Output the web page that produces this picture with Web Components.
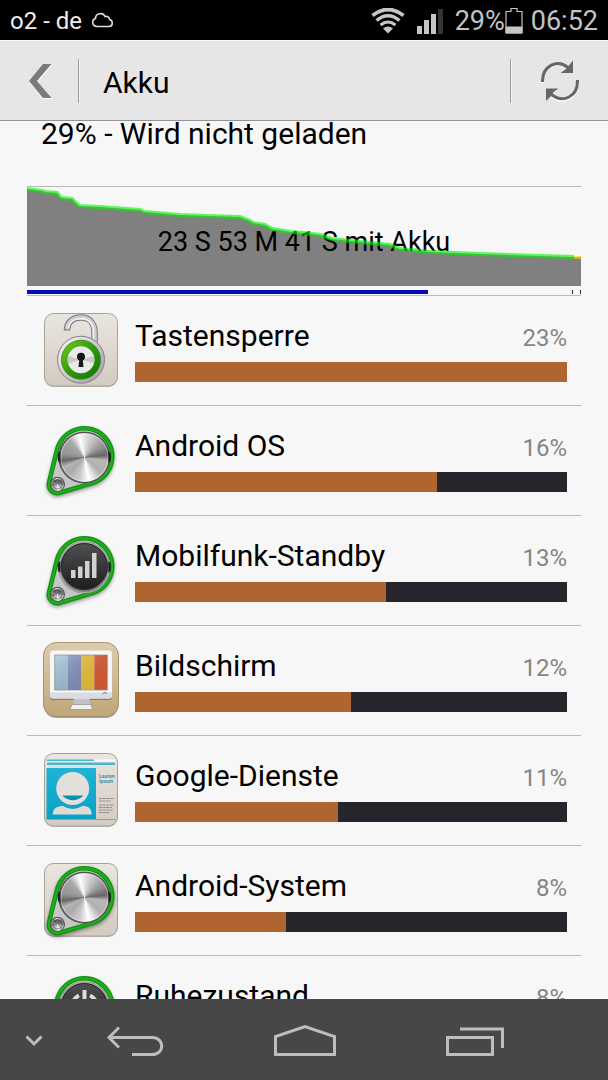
<!DOCTYPE html>
<html lang="de">
<head>
<meta charset="utf-8">
<meta name="viewport" content="width=device-width, initial-scale=1">
<title>Akku</title>
<style>
	body {
		margin: 0;
		background: #f7f7f7;
		color: #000;
		font-family: Roboto, "Liberation Sans", sans-serif;
		font-size: 30px;
	}
</style>
</head>
<body>
<battery-screen></battery-screen>

<script>
class BaseElement extends HTMLElement {
	constructor() {
		super();

		this.attachShadow({ mode: "open" });

		this.shadowRoot.appendChild(this._getTemplate().content.cloneNode(true));
	}

	_getTemplate() {
		const template = document.createElement("template");

		template.innerHTML = this._getMarkup();

		return template;
	}
}

class StatusBar extends BaseElement {
	_getMarkup() {
		return `
			<style>
				:host {
					display: flex;
					flex: none;
					align-items: center;
					box-sizing: border-box;
					height: 40px;
					padding: 2px 10px 0;
					background: #000;
					color: #c3c3c3;
					font-size: 27px;
					line-height: 38px;
				}
				.carrier {
					margin-right: 10px;
					color: #eee;
					font-size: 24px;
				}
				.wifi {
					margin-left: auto;
				}
				.signal {
					margin: 0 12px;
				}
				.clock {
					margin-left: 8px;
				}
				svg {
					display: block;
					flex: none;
				}
			</style>
			<span class="carrier">o2 - de</span>
			<svg width="22" height="18" viewBox="0 0 22 18" fill="none" stroke="#ddd" stroke-width="1.6">
				<path d="M5 14.5C-.5 14-.5 7.5 3.5 6.5C3.5 1 11 0 13 4.5C16 4 17.5 5.500 17.5 7.5C21.5 8.5 21 14.5 17 14.5Z"/>
			</svg>
			<svg class="wifi" width="34" height="26" viewBox="0 0 34 26" fill="none" stroke="#c6c6c6" stroke-width="3.8">
				<path d="M1.500 7.500Q17-4.500 32.500 7.500"/>
				<path d="M5.500 12.500Q17 3 28.500 12.500" stroke-width="3.2"/>
				<path d="M9.500 17Q17 11 24.500 17" stroke-width="3"/>
				<path d="M12 20.500Q17 16.500 22 20.500L17 25.500Z" fill="#c6c6c6" stroke="none"/>
			</svg>
			<svg class="signal" width="26" height="26" viewBox="0 0 26 26" fill="#c6c6c6">
				<path d="M0 18h5v8H0zM7 12h5v14H7zM14 6h5v20h-5z"/>
				<path d="M21 1h5v25h-5z" fill="#333"/>
			</svg>
			<span>29%</span>
			<svg width="18" height="26" viewBox="0 0 18 26" fill="none" stroke="#c6c6c6">
				<path d="M1 25V3.5h5v-3h6v3h5V25z" stroke-width="1.2"/>
				<path d="M1 19h16v6H1z" fill="#c6c6c6"/>
			</svg>
			<time class="clock">06:52</time>
		`;
	}
}

class TitleBar extends BaseElement {
	_getMarkup() {
		return `
			<style>
				:host {
					display: flex;
					flex: none;
					align-items: center;
					box-sizing: border-box;
					height: 81px;
					border-top: 1px solid #f8f8f8;
					border-bottom: 1px solid #949494;
					background: #e6e6e6;
				}
				h1 {
					flex: 1;
					margin: 0;
					padding: 4px 0 0 23px;
					font-size: 30px;
					font-weight: 400;
					line-height: 36px;
				}
				button {
					display: flex;
					justify-content: center;
					align-items: center;
					box-sizing: border-box;
					height: 100%;
					margin: 0;
					padding: 0;
					border: 0;
					background: none;
				}
				.back {
					width: 78px;
					padding-left: 2px;
				}
				.refresh {
					width: 96px;
					padding-top: 2px;
				}
				.rule {
					width: 1px;
					height: 44px;
					background: #999;
					border-right: 1px solid #f4f4f4;
				}
			</style>
			<button class="back" aria-label="Zurück">
				<svg width="24" height="36" viewBox="0 0 24 36">
					<path d="M15 2H24L10 19L24 36H15L1 19Z" fill="#fff"/>
					<path d="M15 1H23.5L9 18L23.5 35H15L1 18Z" fill="#7b7b7b"/>
				</svg>
			</button>
			<div class="rule"></div>
			<h1><slot></slot></h1>
			<div class="rule"></div>
			<button class="refresh" aria-label="Aktualisieren">
				<svg width="40" height="44" viewBox="0 0 40 44" fill="none" stroke-width="3">
					<path d="M2.500 23C2 7 17-1 28.500 8.500M37.500 21C38 38 23 45 11.500 36.500" stroke="#fff"/>
					<path d="M2.500 22C2 6 17-1.500 28 7.500M37.500 20C38 37 23 43.500 11.500 34.500" stroke="#666"/>
					<path d="M33 .5V13H20.500L26 9L28.500 6ZM6 41V28.500H18.500L13.500 32L11 36Z" fill="#666"/>
				</svg>
			</button>
		`;
	}
}

class BatteryChart extends BaseElement {
	_getMarkup() {
		return `
			<style>
				:host {
					display: block;
					padding-bottom: 1px;
					border-top: 1px solid #b9b9b9;
					border-bottom: 1px solid #b9b9b9;
				}
				.plot {
					display: grid;
					align-items: center;
					margin-bottom: 4px;
				}
				.plot > * {
					grid-area: 1 / 1;
				}
				.plot svg {
					display: block;
					width: 100%;
					height: 99px;
				}
				.label {
					padding-top: 10px;
					font-size: 27px;
					line-height: 32px;
					text-align: center;
				}
				.awake {
					display: block;
					width: 100%;
					height: 4px;
				}
			</style>
			<div class="plot">
				<svg viewBox="0 0 554 99" preserveAspectRatio="none">
					<path d="M0 2L15 4L18 5L30 6L34 11L45 12L52 19L73 20L113 23L117 25L153 28L213 30L223 34L226 36L238 38L245 42L263 45L277 46L293 48L305 52L333 55L363 58L373 62L403 65L453 67L543 70H554V99H0Z" fill="#808080"/>
				</svg>
				<div class="label"><slot></slot></div>
				<svg viewBox="0 0 554 99" preserveAspectRatio="none" fill="none" stroke-width="4">
					<path d="M0 2L15 4L18 5L30 6L34 11L45 12L52 19L73 20L113 23L117 25L153 28L213 30L223 34L226 36L238 38L245 42L263 45L277 46L293 48L305 52L333 55L363 58L373 62L403 65L453 67L547 70" stroke="#00f000" stroke-opacity=".6"/>
					<path d="M547 70.500H554" stroke="#ffd400" stroke-opacity=".6" stroke-width="3"/>
				</svg>
			</div>
			<svg class="awake" viewBox="0 0 554 4" preserveAspectRatio="none">
				<path d="M0 0H401V4H0Z" fill="#0a0ab4"/>
				<path d="M545 0H546V4H545ZM553 0H554V4H553Z" fill="#224"/>
			</svg>
		`;
	}
}

const TILE = `
	<rect x="1.500" y="3" width="73" height="72" rx="9" fill="#000" opacity=".25"/>
	<rect x="1.500" y="1.500" width="73" height="72.500" rx="9" fill="url(#tile)" stroke="#a9a29a"/>
`;

const TILE_DEFS = `
	<linearGradient id="tile" x2="0" y2="1">
		<stop stop-color="#e9e5e0"/>
		<stop offset="1" stop-color="#d3cbc1"/>
	</linearGradient>
`;

// Belt around a big and a small wheel, the base of all system icons.
const BELT_PATH = "M14.100 27.600A28 28 0 1 1 49.200 61.100L16.700 70.700A8.500 8.500 0 0 1 6 60.500Z";

const BELT = `
	<path d="${BELT_PATH}" fill="#000" stroke="#000" stroke-width="3" opacity=".5" filter="url(#soft)" transform="translate(0 2)"/>
	<path d="${BELT_PATH}" fill="#c6c6c6" stroke="#129412" stroke-width="4.600" stroke-linejoin="round"/>
	<path d="${BELT_PATH}" fill="none" stroke="#1fae1c" stroke-width="2"/>
	<circle cx="14.500" cy="62.300" r="7.500" fill="#555"/>
	<foreignObject x="8" y="56" width="13" height="13"><div class="metal"></div></foreignObject>
	<circle cx="14.500" cy="62.500" r="4.500" fill="none" stroke="#666" stroke-width=".8"/>
	<path d="M9.500 60C11 56 18 56 19.500 60L14.500 62Z" fill="#444" opacity=".75"/>
`;

const BELT_DEFS = `<filter id="soft" x="-20%" y="-20%" width="140%" height="140%"><feGaussianBlur stdDeviation="2"/></filter>`;

const METAL = `
	<circle cx="41.300" cy="35.500" r="26" fill="#666"/>
	<foreignObject x="16" y="10" width="51" height="51"><div class="metal big"></div></foreignObject>
	<circle cx="41.500" cy="35.500" r="23.500" fill="none" stroke="#fff" stroke-opacity=".35"/>
	<path d="M14.800 38v-5q0-3 2.500-4v12q-2-1-2.500-3zM67.800 38v-5q0-3-2.500-4v12q2-1 2.500-3z" fill="#222"/>
`;

const DARK = `
	<circle cx="41.300" cy="35.500" r="26" fill="#777"/>
	<circle cx="41.300" cy="35.500" r="25" fill="none" stroke="#aaa" stroke-width="1.500"/>
	<path d="M14.800 38v-5q0-3 2.500-4v12q-2-1-2.500-3zM67.800 38v-5q0-3-2.500-4v12q2-1 2.500-3z" fill="#222"/>
	<circle cx="41.300" cy="34.500" r="23" fill="url(#dark)" stroke="#222"/>
`;

const DARK_DEFS = `
	<linearGradient id="dark" x2="0" y2="1">
		<stop stop-color="#505052"/>
		<stop offset="1" stop-color="#1e1e20"/>
	</linearGradient>
`;

const ICONS = {
	lock: `
		<defs>
			${TILE_DEFS}
			<linearGradient id="ring" x2="1" y2="1">
				<stop stop-color="#7ccc16"/>
				<stop offset=".5" stop-color="#2d9c08"/>
				<stop offset="1" stop-color="#0c7405"/>
			</linearGradient>
			<linearGradient id="rim" x2="1" y2="1">
				<stop stop-color="#fafafa"/>
				<stop offset="1" stop-color="#9b9b9b"/>
			</linearGradient>
		</defs>
		${TILE}
		<path d="M24 18.500C24 10 30 5.500 38 5.500C47 5.500 51.500 12 51.500 20V33" fill="none" stroke="#77797b" stroke-width="6.500"/>
		<path d="M24 17.500C24.500 10 30 5.500 38 5.500C47 5.500 51.500 12 51.500 20V33" fill="none" stroke="#ccc" stroke-width="4.500"/>
		<path d="M25 16C26 10 31 6.500 38 6.500C46 6.500 50.500 12 50.500 20V33" fill="none" stroke="#f3f3f3" stroke-width="1.500"/>
		<circle cx="38" cy="47.700" r="23.500" fill="url(#rim)" stroke="#828282"/>
		<circle cx="38" cy="47.700" r="19.500" fill="url(#ring)" stroke="#3d7a26" stroke-width=".8"/>
		<circle cx="38" cy="47.700" r="13.500" fill="#e9e9e9"/>
		<path d="M38 47.700L25 44V51.500ZM38 47.700L51 44V51.500Z" fill="#bbb" opacity=".7"/>
		<circle cx="38" cy="44.800" r="4" fill="#161616"/>
		<path d="M36.500 46H39.500L40.500 55H35.500Z" fill="#161616"/>
	`,
	dial: `<defs>${BELT_DEFS}</defs>${BELT}${METAL}`,
	system: `<defs>${TILE_DEFS}${BELT_DEFS}</defs>${TILE}${BELT}${METAL}`,
	signal: `
		<defs>${BELT_DEFS}${DARK_DEFS}</defs>
		${BELT}${DARK}
		<path d="M28 38h4.500v8H28zM35 34.500h4.500V46H35zM42 29h4.500v17H42zM49 21h4.500v25H49z" fill="#d2d2d2"/>
	`,
	power: `
		<defs>${BELT_DEFS}${DARK_DEFS}</defs>
		${BELT}${DARK}
		<path d="M36 23.500A12.500 12.500 0 1 0 47 23.500M41.500 18V33" fill="none" stroke="#ddd" stroke-width="4"/>
	`,
	screen: `
		<defs>
			<linearGradient id="sand" x2="0" y2="1">
				<stop stop-color="#dccdae"/>
				<stop offset="1" stop-color="#bfa678"/>
			</linearGradient>
			<linearGradient id="shine" x2="1" y2="1">
				<stop stop-color="#fff" stop-opacity=".3"/>
				<stop offset="1" stop-color="#000" stop-opacity=".05"/>
			</linearGradient>
		</defs>
		<rect x=".5" y="2" width="75" height="74" rx="13" fill="#000" opacity=".35"/>
		<rect x=".5" y=".5" width="75" height="74" rx="13" fill="url(#sand)" stroke="#a5936f"/>
		<rect x="7" y="10" width="62" height="48" rx="3" fill="#6d5c3b" opacity=".6"/>
		<path d="M31 56H46.500L47 63H30.500Z" fill="#bfc3c9"/>
		<path d="M29 62.500H48L49.500 67.500H27Z" fill="#eef0f3" stroke="#8a8577" stroke-width=".6"/>
		<rect x="7" y="8.500" width="62" height="48" rx="3" fill="#f6f6f7"/>
		<path d="M7 50.500H69V53.500Q69 56.500 66 56.500H10Q7 56.500 7 53.500Z" fill="#d9dce2"/>
		<path d="M11.700 13H25V48H11.700Z" fill="#9cbfd6"/>
		<path d="M25 13H38V48H25Z" fill="#7d8ebb"/>
		<path d="M38 13H51.300V48H38Z" fill="#edc035"/>
		<path d="M51.300 13H64.300V48H51.300Z" fill="#dc5a32"/>
		<path d="M11.700 13H64.300V48H11.700Z" fill="url(#shine)" stroke="#8b8b8b" stroke-width=".7"/>
		<path d="M59.500 51.800Q62 49 64 51.800" fill="none" stroke="#777"/>
	`,
	contact: `
		<defs>
			${TILE_DEFS}
			<linearGradient id="cyan" x2="0" y2="1">
				<stop stop-color="#1fb4d6"/>
				<stop offset="1" stop-color="#0aa0c4"/>
			</linearGradient>
		</defs>
		${TILE}
		<path d="M4 7.500H51V13H4Z" fill="#4bb7cf"/>
		<path d="M4 9H72V10.500H4Z" fill="#e8f3f5"/>
		<path d="M51 7.500H72V9H51Z" fill="#fff"/>
		<path d="M51 10.500H72V13H51Z" fill="#4bb7cf"/>
		<path d="M3.500 16H53V67.500H3.500Z" fill="url(#cyan)"/>
		<circle cx="29.700" cy="36.500" r="16.500" fill="#e3e0dc"/>
		<path d="M19 43.500H40.500Q30 53 19 43.500Z" fill="#0b8fae"/>
		<path d="M9.700 62.500C10 55 16 54 20 54Q29.700 60 39.500 54C44 54 48.500 55 48.700 62.500Z" fill="#dedad5"/>
		<text x="56" y="25.500">Lauren</text>
		<text x="56" y="30.500">Ipsum</text>
		<path d="M56 46.500H71M56 49H68M56 53H71M56 55.500H69M56 58H70M56 60.500H67" stroke="#8e8c89" stroke-width="1" stroke-dasharray="3 .6"/>
		<path d="M53 67.500H73" stroke="#7ea9b2"/>
	`
};

class AppIcon extends BaseElement {
	_getMarkup() {
		return `
			<style>
				:host {
					display: block;
					width: 76px;
					height: 76px;
				}
				svg {
					display: block;
					overflow: visible;
				}
				text {
					fill: #3a93ad;
					font-size: 5px;
					font-weight: 700;
				}
				.metal {
					width: 100%;
					height: 100%;
					border-radius: 50%;
					background: conic-gradient(#e4e4e4, #b4b4b4 35deg, #8f8f8f 60deg, #666 84deg, #b8b8b8 98deg, #b0b0b0 135deg, #fff 168deg, #c8c8c8 195deg, #aaa 225deg, #b4b4b4 245deg, #666 262deg, #959595 280deg, #a8a8a8 320deg, #fff 345deg, #e4e4e4);
				}
				.big {
					box-sizing: border-box;
					border: 1px solid #4c4c4c;
				}
			</style>
			<svg width="76" height="76" viewBox="0 0 76 76" aria-hidden="true"></svg>
		`;
	}

	connectedCallback() {
		this.shadowRoot.querySelector("svg").innerHTML = ICONS[this.getAttribute("name")];
	}
}

class BatteryEntry extends BaseElement {
	static get observedAttributes() {
		return ["label", "percent", "level"];
	}

	_getMarkup() {
		return `
			<style>
				:host {
					display: flex;
					align-items: center;
					gap: 16px;
					box-sizing: border-box;
					height: 110px;
					padding: 0 14px 2px 16px;
					border-bottom: 1px solid #b9b9b9;
				}
				.body {
					flex: 1;
				}
				.head {
					display: flex;
					justify-content: space-between;
					align-items: baseline;
					margin-bottom: 6px;
					line-height: 36px;
				}
				.percent {
					color: #858585;
					font-size: 24px;
				}
				progress {
					display: block;
					width: 100%;
					height: 20px;
					border: 0;
					background: #25252b;
					appearance: none;
				}
				progress::-webkit-progress-bar {
					background: #25252b;
				}
				progress::-webkit-progress-value {
					background: #b06530;
				}
			</style>
			<slot name="icon"></slot>
			<div class="body">
				<div class="head">
					<label class="name" for="usage"></label>
					<span class="percent"></span>
				</div>
				<progress id="usage" max="100"></progress>
			</div>
		`;
	}

	attributeChangedCallback(name, oldValue, newValue) {
		if (name === "label") {
			this.shadowRoot.querySelector(".name").textContent = newValue;
		}
		else if (name === "percent") {
			this.shadowRoot.querySelector(".percent").textContent = newValue + "%";
		}
		else {
			this.shadowRoot.querySelector("progress").value = newValue;
		}
	}
}

class NavBar extends BaseElement {
	_getMarkup() {
		return `
			<style>
				:host {
					display: flex;
					flex: none;
					box-sizing: border-box;
					height: 81px;
					padding-right: 48px;
					background: #474747;
				}
				button {
					display: flex;
					flex: 1;
					justify-content: center;
					align-items: center;
					margin: 0;
					padding: 2px 0 0;
					border: 0;
					background: none;
				}
				.hide {
					flex: none;
					width: 50px;
					padding: 2px 0 0 18px;
				}
				svg {
					fill: none;
					stroke: #bdbdbd;
					stroke-width: 3;
				}
			</style>
			<button class="hide" aria-label="Ausblenden">
				<svg width="18" height="12" viewBox="0 0 18 12"><path d="M1.500 1.500L9 9L16.500 1.500"/></svg>
			</button>
			<button aria-label="Zurück">
				<svg width="58" height="34" viewBox="0 0 58 34"><path d="M13 3.500L3 13.500L13 23.500M3 13.500H46C59 13.500 59 30.500 46 30.500H26"/></svg>
			</button>
			<button aria-label="Startseite">
				<svg width="62" height="34" viewBox="0 0 62 34"><path d="M1.500 30.500V12.500L31 2.500L60.500 12.500V30.500Z"/></svg>
			</button>
			<button aria-label="Letzte Apps">
				<svg width="60" height="34" viewBox="0 0 60 34"><path d="M2.500 13.500H47.500V30.500H2.500ZM15 5H57.500V24"/></svg>
			</button>
		`;
	}
}

class BatteryScreen extends BaseElement {
	_getMarkup() {
		return `
			<style>
				:host {
					display: flex;
					flex-direction: column;
					height: 100vh;
				}
				main {
					flex: 1;
					min-height: 0;
					padding: 0 27px;
					overflow-y: auto;
					scrollbar-width: none;
				}
				.state {
					margin: 0 0 39px;
					padding-left: 14px;
					line-height: 26px;
				}
			</style>
			<status-bar></status-bar>
			<title-bar>Akku</title-bar>
			<main>
				<p class="state">29% - Wird nicht geladen</p>
				<battery-chart>23 S 53 M 41 S mit Akku</battery-chart>
				<battery-entry label="Tastensperre" percent="23" level="100"><app-icon slot="icon" name="lock"></app-icon></battery-entry>
				<battery-entry label="Android OS" percent="16" level="70"><app-icon slot="icon" name="dial"></app-icon></battery-entry>
				<battery-entry label="Mobilfunk-Standby" percent="13" level="58"><app-icon slot="icon" name="signal"></app-icon></battery-entry>
				<battery-entry label="Bildschirm" percent="12" level="50"><app-icon slot="icon" name="screen"></app-icon></battery-entry>
				<battery-entry label="Google-Dienste" percent="11" level="47"><app-icon slot="icon" name="contact"></app-icon></battery-entry>
				<battery-entry label="Android-System" percent="8" level="35"><app-icon slot="icon" name="system"></app-icon></battery-entry>
				<battery-entry label="Ruhezustand" percent="8" level="34"><app-icon slot="icon" name="power"></app-icon></battery-entry>
			</main>
			<nav-bar></nav-bar>
		`;
	}
}

customElements.define("status-bar", StatusBar);
customElements.define("title-bar", TitleBar);
customElements.define("battery-chart", BatteryChart);
customElements.define("app-icon", AppIcon);
customElements.define("battery-entry", BatteryEntry);
customElements.define("nav-bar", NavBar);
customElements.define("battery-screen", BatteryScreen);
</script>
</body>
</html>
